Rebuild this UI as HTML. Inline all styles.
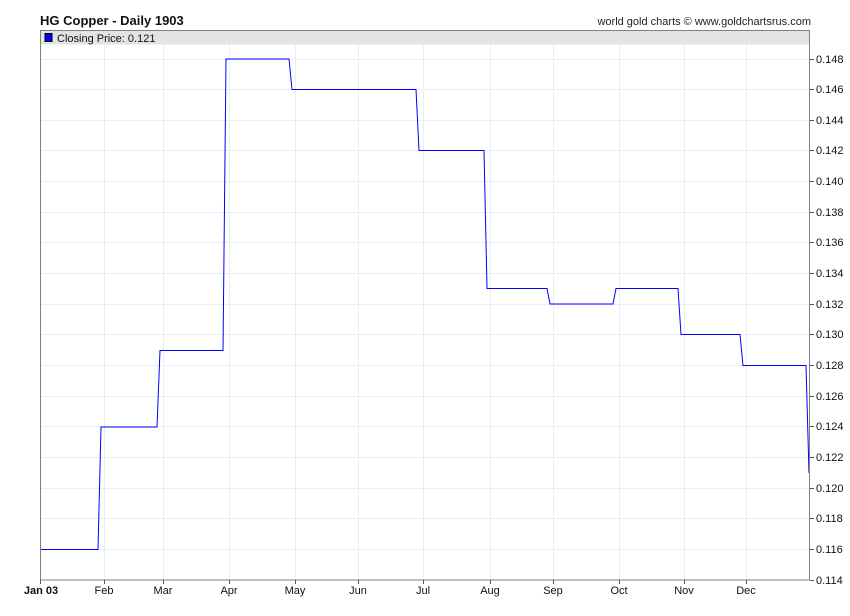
<!DOCTYPE html>
<html><head><meta charset="utf-8"><style>
body{margin:0;background:#fff;}
svg{display:block;font-family:"Liberation Sans",Arial,sans-serif;}
</style></head><body>
<svg width="850" height="616" viewBox="0 0 850 616" xmlns="http://www.w3.org/2000/svg">
<rect width="850" height="616" fill="#fff"/>
<text x="40" y="25" font-size="13" font-weight="bold" fill="#111">HG Copper - Daily 1903</text>
<text x="811" y="25" font-size="11" fill="#222" text-anchor="end">world gold charts © www.goldchartsrus.com</text>
<g stroke="#e4eff9" stroke-width="1">
<line x1="40" x2="810" y1="549.5" y2="549.5"/><line x1="40" x2="810" y1="518.5" y2="518.5"/>
<line x1="40" x2="810" y1="488.5" y2="488.5"/><line x1="40" x2="810" y1="457.5" y2="457.5"/>
<line x1="40" x2="810" y1="426.5" y2="426.5"/><line x1="40" x2="810" y1="396.5" y2="396.5"/>
<line x1="40" x2="810" y1="365.5" y2="365.5"/><line x1="40" x2="810" y1="334.5" y2="334.5"/>
<line x1="40" x2="810" y1="304.5" y2="304.5"/><line x1="40" x2="810" y1="273.5" y2="273.5"/>
<line x1="40" x2="810" y1="242.5" y2="242.5"/><line x1="40" x2="810" y1="212.5" y2="212.5"/>
<line x1="40" x2="810" y1="181.5" y2="181.5"/><line x1="40" x2="810" y1="150.5" y2="150.5"/>
<line x1="40" x2="810" y1="120.5" y2="120.5"/><line x1="40" x2="810" y1="89.5" y2="89.5"/>
<line x1="40" x2="810" y1="59.5" y2="59.5"/>
<line y1="30" y2="580" x1="104.5" x2="104.5"/><line y1="30" y2="580" x1="163.5" x2="163.5"/>
<line y1="30" y2="580" x1="229.5" x2="229.5"/><line y1="30" y2="580" x1="295.5" x2="295.5"/>
<line y1="30" y2="580" x1="358.5" x2="358.5"/><line y1="30" y2="580" x1="423.5" x2="423.5"/>
<line y1="30" y2="580" x1="490.5" x2="490.5"/><line y1="30" y2="580" x1="553.5" x2="553.5"/>
<line y1="30" y2="580" x1="619.5" x2="619.5"/><line y1="30" y2="580" x1="684.5" x2="684.5"/>
<line y1="30" y2="580" x1="746.5" x2="746.5"/>
</g>
<rect x="40.5" y="30.5" width="769" height="14" fill="#e3e3e3"/>
<rect x="45" y="33.5" width="7" height="8" fill="#0000ee" stroke="#000" stroke-width="1"/>
<text x="57" y="42" font-size="11" fill="#111">Closing Price: 0.121</text>
<polyline fill="none" stroke="#0000ff" stroke-width="1" points="40,549.5 98,549.5 101,427 157,427 160,350.5 223,350.5 226,59 289,59 292,89.5 416,89.5 419,150.5 484,150.5 487,288.5 547,288.5 550,304 613,304 616,288.5 678,288.5 681,334.5 740,334.5 743,365.5 806,365.5 809,473"/>
<rect x="40.5" y="30.5" width="769" height="549.5" fill="none" stroke="#808080" stroke-width="1"/>
<g stroke="#555" stroke-width="1">
<line x1="810" x2="814" y1="580.5" y2="580.5"/><line x1="810" x2="814" y1="549.5" y2="549.5"/>
<line x1="810" x2="814" y1="518.5" y2="518.5"/><line x1="810" x2="814" y1="488.5" y2="488.5"/>
<line x1="810" x2="814" y1="457.5" y2="457.5"/><line x1="810" x2="814" y1="426.5" y2="426.5"/>
<line x1="810" x2="814" y1="396.5" y2="396.5"/><line x1="810" x2="814" y1="365.5" y2="365.5"/>
<line x1="810" x2="814" y1="334.5" y2="334.5"/><line x1="810" x2="814" y1="304.5" y2="304.5"/>
<line x1="810" x2="814" y1="273.5" y2="273.5"/><line x1="810" x2="814" y1="242.5" y2="242.5"/>
<line x1="810" x2="814" y1="212.5" y2="212.5"/><line x1="810" x2="814" y1="181.5" y2="181.5"/>
<line x1="810" x2="814" y1="150.5" y2="150.5"/><line x1="810" x2="814" y1="120.5" y2="120.5"/>
<line x1="810" x2="814" y1="89.5" y2="89.5"/><line x1="810" x2="814" y1="59.5" y2="59.5"/>
<line y1="580" y2="584" x1="40.5" x2="40.5"/><line y1="580" y2="584" x1="104.5" x2="104.5"/>
<line y1="580" y2="584" x1="163.5" x2="163.5"/><line y1="580" y2="584" x1="229.5" x2="229.5"/>
<line y1="580" y2="584" x1="295.5" x2="295.5"/><line y1="580" y2="584" x1="358.5" x2="358.5"/>
<line y1="580" y2="584" x1="423.5" x2="423.5"/><line y1="580" y2="584" x1="490.5" x2="490.5"/>
<line y1="580" y2="584" x1="553.5" x2="553.5"/><line y1="580" y2="584" x1="619.5" x2="619.5"/>
<line y1="580" y2="584" x1="684.5" x2="684.5"/><line y1="580" y2="584" x1="746.5" x2="746.5"/>
</g>
<g font-size="11" fill="#111">
<text x="816" y="584">0.114</text><text x="816" y="553">0.116</text><text x="816" y="522">0.118</text>
<text x="816" y="492">0.120</text><text x="816" y="461">0.122</text><text x="816" y="430">0.124</text>
<text x="816" y="400">0.126</text><text x="816" y="369">0.128</text><text x="816" y="338">0.130</text>
<text x="816" y="308">0.132</text><text x="816" y="277">0.134</text><text x="816" y="246">0.136</text>
<text x="816" y="216">0.138</text><text x="816" y="185">0.140</text><text x="816" y="154">0.142</text>
<text x="816" y="124">0.144</text><text x="816" y="93">0.146</text><text x="816" y="63">0.148</text>
</g>
<g font-size="11" fill="#111" text-anchor="middle">
<text x="41" y="594" font-weight="bold">Jan 03</text>
<text x="104" y="594">Feb</text><text x="163" y="594">Mar</text><text x="229" y="594">Apr</text>
<text x="295" y="594">May</text><text x="358" y="594">Jun</text><text x="423" y="594">Jul</text>
<text x="490" y="594">Aug</text><text x="553" y="594">Sep</text><text x="619" y="594">Oct</text>
<text x="684" y="594">Nov</text><text x="746" y="594">Dec</text>
</g>
</svg>
</body></html>
